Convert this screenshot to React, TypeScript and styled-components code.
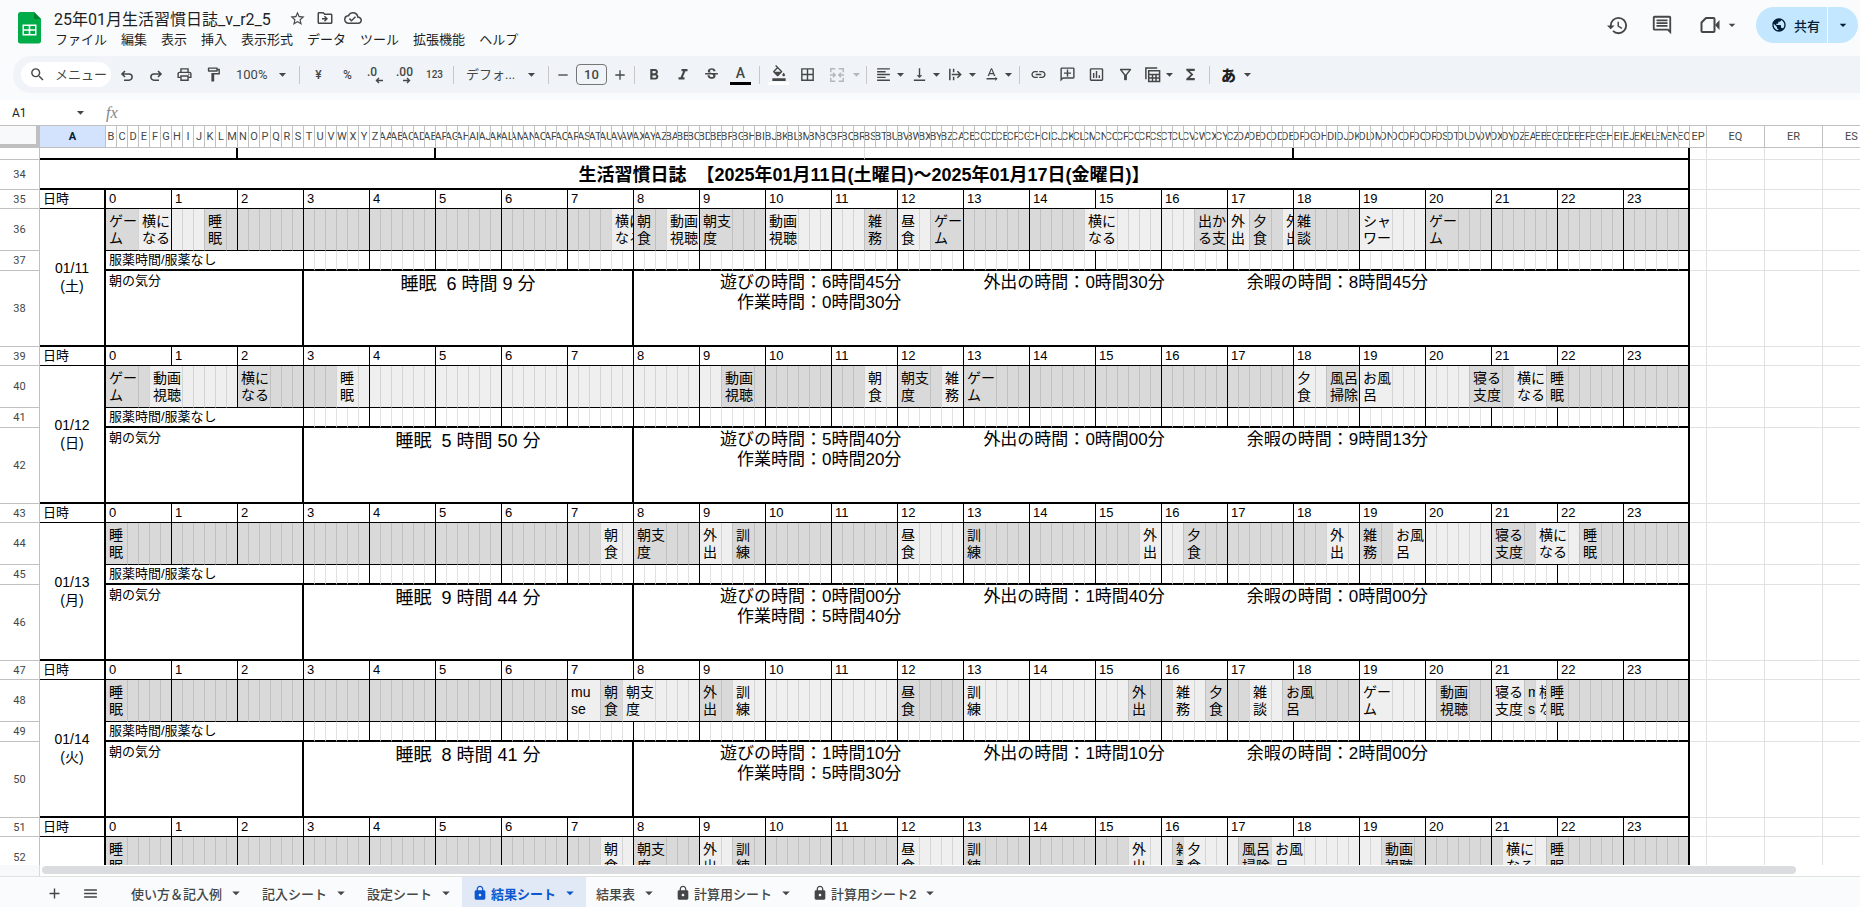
import React from "react";
import styled, { createGlobalStyle, css } from "styled-components";
import {
  MdAdd, MdArrowDropDown, MdBorderAll, MdFormatAlignLeft, MdFormatBold, MdFormatColorFill,
  MdFormatItalic, MdFunctions, MdHistory, MdInsertChartOutlined, MdLink,
  MdLock, MdMenu, MdOutlineAddComment, MdOutlineCloudDone, MdOutlineComment,
  MdOutlineDriveFileMove, MdOutlineFilterAlt, MdOutlineFormatPaint, MdOutlinePrint, MdPublic,
  MdRemove, MdSearch, MdStarBorder, MdStrikethroughS, MdTextRotationNone, MdVerticalAlignBottom,
} from "react-icons/md";

const UI = `Roboto, "Noto Sans CJK JP", sans-serif`;
const CELL = `"Liberation Sans", "Noto Sans CJK JP", sans-serif`;

const Global = createGlobalStyle`
  *, *::before, *::after { box-sizing: border-box; }
  body { margin: 0; background: #f9fbfd; color: #444746; font-family: ${UI}; overflow: hidden; }
  button, input, select {
    font-family: inherit; color: inherit; background: none; border: 0; padding: 0; margin: 0; outline: 0;
  }
  svg { display: block; flex: none; }
`;

/* ---------- shell ---------- */

const Page = styled.div`
  display: flex;
  flex-direction: column;
  height: 100vh;
`;

const Header = styled.header`
  display: flex;
  align-items: flex-start;
  justify-content: space-between;
  height: 56px;
  flex: none;
  padding: 7px 2px 0 18px;
`;

const Brand = styled.div`
  display: flex;
  gap: 6px;
`;

const Logo = styled.svg`
  width: 24px;
  height: 32px;
  margin-top: 5px;
`;

const TitleRow = styled.div`
  display: flex;
  align-items: center;
  height: 22px;
  padding-left: 6px;
  gap: 10px;
`;

const TitleInput = styled.input`
  width: 225px;
  height: 22px;
  font-size: 16px;
  color: #1f1f1f;
`;

const PlainButton = styled.button`
  display: flex;
  align-items: center;
  justify-content: center;
`;

const MenuBar = styled.nav`
  display: flex;
  height: 22px;
`;

const MenuItem = styled.button`
  padding: 0 7px;
  font-size: 13px;
  line-height: 22px;
  color: #1f1f1f;
  white-space: nowrap;
`;

const HeaderTools = styled.div`
  display: flex;
  align-items: center;
  height: 36px;
  gap: 22px;
`;

const MeetButton = styled(PlainButton)`
  gap: 4px;
  margin-left: 5px;
`;

const Share = styled.div`
  display: flex;
  height: 36px;
  margin-left: -6px;
  border-radius: 18px;
  overflow: hidden;
  background: #c2e7ff;
  color: #001d35;
`;

const ShareMain = styled(PlainButton)`
  gap: 7px;
  width: 71px;
  padding-left: 8px;
  font-size: 13px;
  font-weight: 500;
`;

const ShareMore = styled(PlainButton)`
  width: 31px;
  border-left: 1px solid #f9fbfd;
`;

/* ---------- toolbar ---------- */

const Toolbar = styled.div`
  display: flex;
  align-items: center;
  flex: none;
  height: 37px;
  margin: 0 0 7px 13px;
  padding-left: 8px;
  border-radius: 18px 0 0 18px;
  background: #f0f4f9;
`;

const SearchPill = styled.label`
  display: flex;
  align-items: center;
  gap: 9px;
  width: 90px;
  height: 25px;
  margin-right: 1px;
  padding-left: 8px;
  border-radius: 13px;
  background: #fff;
`;

const SearchInput = styled.input`
  width: 54px;
  font-size: 13px;
  &::placeholder { color: #444746; opacity: 1; }
`;

const Tool = styled(PlainButton)<{ $w?: number; $faint?: boolean; $size?: number }>`
  width: ${(p) => p.$w ?? 29}px;
  height: 25px;
  flex: none;
  font-size: ${(p) => p.$size ?? 13}px;
  font-weight: 500;
  ${(p) => p.$faint && css`color: #b4b7ba;`}
`;

const DropTool = styled(Tool)`
  justify-content: flex-start;
  padding-left: ${(p) => (p.$w === 40 ? 7 : 4)}px;
  gap: ${(p) => (p.$w === 40 ? 3 : 0)}px;
`;

const Sep = styled.span`
  flex: none;
  width: 1px;
  height: 18px;
  margin: 0 4px;
  background: #c7c7c7;
`;

const Picker = styled.label<{ $w: number }>`
  display: flex;
  align-items: center;
  justify-content: space-between;
  flex: none;
  width: ${(p) => p.$w}px;
  height: 25px;
  padding: 0 4px 0 8px;
`;

const PickerSelect = styled.select`
  appearance: none;
  font-size: 13px;
`;

const SizeGroup = styled.div`
  display: flex;
  align-items: center;
  gap: 3px;
`;

const SizeInput = styled.input`
  width: 31px;
  height: 21px;
  border: 1px solid #747775;
  border-radius: 4px;
  text-align: center;
  font-size: 13px;
  font-weight: 500;
`;

const Swatch = styled.span<{ $c: string }>`
  display: flex;
  flex-direction: column;
  align-items: center;
  width: 21px;
  height: 20px;
  border-bottom: 3px solid ${(p) => p.$c};
  font-size: 14px;
  line-height: 17px;
`;

const Mirror = styled.span`
  transform: scaleX(-1);
`;

const Kana = styled.span`
  font-size: 15px;
  font-weight: 900;
  color: #1f1f1f;
`;

/* ---------- formula bar ---------- */

const FormulaBar = styled.div`
  display: flex;
  align-items: center;
  flex: none;
  height: 26px;
  padding: 0 12px;
  background: #fff;
  border-bottom: 1px solid #c0c0c0;
`;

const NameBox = styled.input`
  width: 60px;
  font-size: 12px;
  color: #1f1f1f;
`;

const Fx = styled.label`
  margin: 0 10px 0 17px;
  font: italic 16px "Liberation Serif", serif;
  color: #80868b;
`;

const FormulaInput = styled.input`
  flex: 1;
  font-size: 13px;
`;

/* ---------- sheet ---------- */

const Viewport = styled.main`
  flex: 1;
  min-height: 0;
  overflow: hidden;
  background: #fff;
`;

const Grid = styled.table`
  table-layout: fixed;
  width: 1881px;
  border-collapse: separate;
  border-spacing: 0;
  font-family: ${CELL};
  font-size: 13px;
  line-height: 16px;
  color: #000;
  td, th { padding: 0; overflow: hidden; white-space: nowrap; }
`;

const Corner = styled.th`
  height: 22px;
  background: #f8f9fa;
  border: solid #c0c0c0;
  border-width: 0 4px 4px 0;
`;

const ColHead = styled.th<{ $on?: boolean }>`
  height: 22px;
  border: solid #c0c0c0;
  border-width: 0 1px 1px 0;
  font: ${(p) => (p.$on ? 700 : 400)} 11px ${UI};
  color: ${(p) => (p.$on ? "#001d35" : "#444746")};
  background: ${(p) => (p.$on ? "#d3e3fd" : "#fff")};
`;

const ColName = styled.span`
  display: flex;
  justify-content: center;
`;

const RowHead = styled.th`
  border: solid #c0c0c0;
  border-width: 0 1px 1px 0;
  font: 400 11px ${UI};
  color: #444746;
`;

const Row = styled.tr<{ $h: number }>`
  height: ${(p) => p.$h}px;
`;

const Cell = styled.td<{ $r?: number; $b?: number; $rc?: string; $bg?: string }>`
  border: solid #000;
  border-width: 0 ${(p) => p.$r ?? 1}px ${(p) => p.$b ?? 1}px 0;
  border-right-color: ${(p) => p.$rc ?? "#000"};
  background: ${(p) => p.$bg ?? "#fff"};
`;

const TextCell = styled(Cell)`
  && { padding-left: 3px; }
`;

const LabelCell = styled(Cell)`
  && { padding-left: 3px; white-space: pre; }
  font-size: 14px;
  line-height: 17px;
`;

const DateCell = styled(Cell)`
  text-align: center;
  font-size: 14px;
  line-height: 18px;
`;

const TitleCell = styled(Cell)`
  && { padding-top: 2px; white-space: pre; }
  text-align: center;
  font-size: 18px;
  font-weight: 700;
  line-height: 24px;
`;

const MoodCell = styled(Cell)`
  && { padding: 2px 0 0 3px; }
  vertical-align: top;
  line-height: 16px;
`;

const SleepCell = styled(Cell)`
  && { padding-top: 2px; white-space: pre; }
  vertical-align: top;
  text-align: center;
  font-size: 18px;
  line-height: 22px;
`;

const SumCell = styled(Cell)`
  && { padding: 2px 0 0 86px; }
  vertical-align: top;
  font-size: 17px;
  line-height: 20px;
`;

const Sums = styled.div`
  display: flex;
  gap: 82px;
  text-align: right;
`;

const Outer = styled.td`
  border: solid #e1e1e1;
  border-width: 0 1px 1px 0;
`;

/* ---------- footer ---------- */

const ScrollTrack = styled.div`
  display: flex;
  flex: none;
  height: 12px;
  background: #fff;
  border-bottom: 1px solid #e1e3e1;
`;

const ScrollGutter = styled.div`
  width: 40px;
  margin-right: 2px;
  background: #f8f9fa;
  border-right: 1px solid #d9d9d9;
`;

const ScrollThumb = styled.div`
  flex: 1;
  height: 8px;
  margin: 1px 64px 0 0;
  border-radius: 4px;
  background: #dadce0;
`;

const Tabs = styled.footer`
  display: flex;
  flex: none;
  height: 30px;
  padding-left: 36px;
`;

const TabTool = styled(PlainButton)`
  width: 36px;
  padding-top: 2px;
`;

const TabList = styled.div`
  display: flex;
  margin-left: 13px;
`;

const Tab = styled.button<{ $on?: boolean }>`
  display: flex;
  align-items: center;
  padding: 2px 7px 0 10px;
  font-size: 13px;
  font-weight: ${(p) => (p.$on ? 700 : 500)};
  color: ${(p) => (p.$on ? "#0b57d0" : "#444746")};
  background: ${(p) => (p.$on ? "#e1e9f7" : "transparent")};
  white-space: nowrap;
`;

const TabLock = styled(MdLock)`
  margin-right: 3px;
`;

const TabArrow = styled(MdArrowDropDown)`
  margin-left: 5px;
`;

/* ---------- icons drawn here ---------- */

const Stroke = ({ children, size = 18 }: { children: React.ReactNode; size?: number }) => (
  <svg width={size} height={size} viewBox="0 0 18 18" fill="none" stroke="currentColor" strokeWidth="1.6">
    {children}
  </svg>
);

const UndoIcon = () => (
  <Stroke><path d="M7 5 4 8l3 3M4.500 8h6.500a3.100 3.100 0 0 1 0 6.200H6" /></Stroke>
);
const RedoIcon = () => (
  <Stroke><path d="M11 5l3 3-3 3M13.500 8H7a3.100 3.100 0 0 0 0 6.200h5" /></Stroke>
);
const MergeIcon = () => (
  <Stroke size={16}>
    <path d="M7 2H2v4M11 2h5v4M7 16H2v-4M11 16h5v-4M1 9h5M17 9h-5M4.500 6.500 7 9l-2.500 2.500M13.500 6.500 11 9l2.500 2.500" />
  </Stroke>
);
const OverflowIcon = () => (
  <Stroke size={17}><path d="M3 3v12M7 3v3.500M7 11.500V15M5 9h9M11 5.500 14.500 9 11 12.500" /></Stroke>
);
const TableViewIcon = () => (
  <Stroke size={17}><path d="M2 14V2h12M5 5h11.500v11.500H5zM5 9h11.500M5 12.700h11.500M9 9v7.500M12.700 9v7.500" /></Stroke>
);
const DecimalIcon = ({ digits, dir }: { digits: string; dir: "l" | "r" }) => (
  <svg width="22" height="20" viewBox="0 0 22 20">
    <text x="1" y="11" fontFamily="Roboto" fontSize="12" fontWeight="500" fill="currentColor">{digits}</text>
    <path
      d={dir === "l" ? "M17 15.500h-6M13 13l-2.500 2.500L13 18" : "M8 15.500h6M12 13l2.500 2.500L12 18"}
      fill="none" stroke="currentColor" strokeWidth="1.400"
    />
  </svg>
);
const MeetIcon = () => (
  <svg width="20" height="18" viewBox="0 0 20 18">
    <path d="M6 2h7.500a1 1 0 0 1 1 1v12a1 1 0 0 1-1 1H2.500a1 1 0 0 1-1-1V6.500z" fill="none" stroke="currentColor" strokeWidth="2" strokeLinejoin="round" />
    <path d="M15 9l4.500-5v10z" fill="currentColor" />
  </svg>
);

/* ---------- data ---------- */

type Seg = [slot: number, label: string];
type Day = { row: number; date?: [string, string]; segs: Seg[]; sleep?: string; sums?: string[] };

const GAME = "ゲー\nム", LIE = "横に\nなる", SLEEP = "睡\n眠", BREAKFAST = "朝\n食", READY = "朝支\n度";
const VIDEO = "動画\n視聴", CHORE = "雑\n務", LUNCH = "昼\n食", OUT = "外\n出", DINNER = "夕\n食";
const TALK = "雑\n談", TRAIN = "訓\n練", BATH = "お風\n呂", SCRUB = "風呂\n掃除", BED = "寝る\n支度", MUSE = "mu\nse";

const days: Day[] = [
  {
    row: 35, date: ["01/11", "(土)"], sleep: "睡眠  6 時間 9 分", sums: ["6時間45分", "0時間30分", "0時間30分", "8時間45分"],
    segs: [[0, GAME], [3, LIE], [9, SLEEP], [46, LIE], [48, BREAKFAST], [51, VIDEO], [54, READY], [60, VIDEO], [69, CHORE],
      [72, LUNCH], [75, GAME], [89, LIE], [99, "出か\nる支"], [102, OUT], [104, DINNER], [107, OUT], [108, TALK],
      [114, "シャ\nワー"], [120, GAME]],
  },
  {
    row: 39, date: ["01/12", "(日)"], sleep: "睡眠  5 時間 50 分", sums: ["5時間40分", "0時間20分", "0時間00分", "9時間13分"],
    segs: [[0, GAME], [4, VIDEO], [12, LIE], [21, SLEEP], [56, VIDEO], [69, BREAKFAST], [72, READY], [76, CHORE], [78, GAME],
      [108, DINNER], [111, SCRUB], [114, BATH], [124, BED], [128, LIE], [131, SLEEP]],
  },
  {
    row: 43, date: ["01/13", "(月)"], sleep: "睡眠  9 時間 44 分", sums: ["0時間00分", "5時間40分", "1時間40分", "0時間00分"],
    segs: [[0, SLEEP], [45, BREAKFAST], [48, READY], [54, OUT], [57, TRAIN], [72, LUNCH], [78, TRAIN], [94, OUT], [98, DINNER],
      [111, OUT], [114, CHORE], [117, BATH], [126, BED], [130, LIE], [134, SLEEP]],
  },
  {
    row: 47, date: ["01/14", "(火)"], sleep: "睡眠  8 時間 41 分", sums: ["1時間10分", "5時間30分", "1時間10分", "2時間00分"],
    segs: [[0, SLEEP], [42, MUSE], [45, BREAKFAST], [47, READY], [54, OUT], [57, TRAIN], [72, LUNCH], [78, TRAIN], [93, OUT],
      [97, CHORE], [100, DINNER], [104, TALK], [107, BATH], [114, GAME], [121, VIDEO], [126, BED], [129, MUSE], [130, LIE],
      [131, SLEEP]],
  },
  {
    row: 51,
    segs: [[0, SLEEP], [45, BREAKFAST], [48, READY], [54, OUT], [57, TRAIN], [72, LUNCH], [78, TRAIN], [93, OUT], [97, CHORE],
      [98, DINNER], [103, SCRUB], [106, BATH], [116, VIDEO], [127, LIE], [131, SLEEP]],
  },
];

const SLOTS = 144;
const range = (n: number) => Array.from({ length: n }, (_, i) => i);
const colName = (n: number): string =>
  n < 26 ? String.fromCharCode(65 + n) : colName(Math.floor(n / 26) - 1) + String.fromCharCode(65 + (n % 26));

const DARK = "#d9d9d9", LIGHT = "#efefef";

const OuterCells = () => <>{range(4).map((i) => <Outer key={i} />)}</>;

/* One day's activity strip: each activity is a label cell followed by plain ten-minute cells. */
const ActivityCells = ({ segs }: { segs: Seg[] }) => {
  const edge = (end: number, nextDark: boolean) =>
    end === SLOTS ? { $r: 2 } : end % 6 === 0 ? {} : { $rc: nextDark ? "#c0c0c0" : "#d4d4d4" };
  return (
    <>
      {segs.map(([start, label], i) => {
        const end = segs[i + 1]?.[0] ?? SLOTS;
        const dark = i % 2 === 0;
        const bg = dark ? DARK : LIGHT;
        const span = Math.min(label.indexOf("\n") === 1 ? 2 : 3, end - start);
        const labelEnd = start + span;
        return (
          <React.Fragment key={start}>
            <LabelCell colSpan={span} $bg={bg} {...edge(labelEnd, labelEnd === end ? !dark : dark)}>{label}</LabelCell>
            {range(end - labelEnd).map((k) => {
              const e = labelEnd + k + 1;
              return <Cell key={k} $bg={bg} {...edge(e, e === end ? !dark : dark)} />;
            })}
          </React.Fragment>
        );
      })}
    </>
  );
};

const DayRows = ({ day }: { day: Day }) => (
  <>
    <Row $h={19}>
      <RowHead>{day.row}</RowHead>
      <TextCell $r={2}>日時</TextCell>
      {range(24).map((h) => <TextCell key={h} colSpan={6} $r={h === 23 ? 2 : 1}>{h}</TextCell>)}
      <OuterCells />
    </Row>
    <Row $h={42}>
      <RowHead>{day.row + 1}</RowHead>
      <DateCell rowSpan={day.date ? 3 : 1} $r={2} $b={2}>
        {day.date && <>{day.date[0]}<br />{day.date[1]}</>}
      </DateCell>
      <ActivityCells segs={day.segs} />
      <OuterCells />
    </Row>
    {day.sums && (
      <>
        <Row $h={20}>
          <RowHead>{day.row + 2}</RowHead>
          <TextCell colSpan={18} $b={2}>服薬時間/服薬なし</TextCell>
          {range(126).map((k) => {
            const hour = (k + 1) % 6 === 0;
            return <Cell key={k} $b={2} $r={k === 125 ? 2 : 1} $rc={hour ? "#000" : "#e1e1e1"} />;
          })}
          <OuterCells />
        </Row>
        <Row $h={76}>
          <RowHead>{day.row + 3}</RowHead>
          <MoodCell colSpan={18} $r={2} $b={2}>朝の気分</MoodCell>
          <SleepCell colSpan={30} $r={2} $b={2}>{day.sleep}</SleepCell>
          <SumCell colSpan={96} $r={2} $b={2}>
            <Sums>
              <div>遊びの時間：{day.sums[0]}<br />作業時間：{day.sums[1]}</div>
              <div>外出の時間：{day.sums[2]}</div>
              <div>余暇の時間：{day.sums[3]}</div>
            </Sums>
          </SumCell>
          <OuterCells />
        </Row>
      </>
    )}
  </>
);

const Sheet = () => (
  <Viewport>
    <Grid>
      <colgroup>
        <col width={40} />
        <col width={66} />
        {range(SLOTS).map((i) => <col key={i} width={11} />)}
        <col width={17} />
        <col width={58} />
        <col width={58} />
        <col width={58} />
      </colgroup>
      <thead>
        <tr>
          <Corner />
          {range(SLOTS + 5).map((i) => (
            <ColHead key={i} $on={i === 0}><ColName>{colName(i)}</ColName></ColHead>
          ))}
        </tr>
      </thead>
      <tbody>
        <Row $h={12}>
          <RowHead />
          <Cell colSpan={13} $r={2} $b={2} />
          <Cell colSpan={18} $r={2} $b={2} />
          <Cell colSpan={39} $b={2} $rc="#e1e1e1" />
          <Cell colSpan={39} $r={2} $b={2} />
          <Cell colSpan={36} $r={2} $b={2} />
          <OuterCells />
        </Row>
        <Row $h={30}>
          <RowHead>34</RowHead>
          <TitleCell colSpan={145} $r={2} $b={2}>
            生活習慣日誌  【2025年01月11日(土曜日)～2025年01月17日(金曜日)】
          </TitleCell>
          <OuterCells />
        </Row>
        {days.map((d) => <DayRows key={d.row} day={d} />)}
      </tbody>
    </Grid>
  </Viewport>
);

const menus = ["ファイル", "編集", "表示", "挿入", "表示形式", "データ", "ツール", "拡張機能", "ヘルプ"];
const tabs: { name: string; lock?: boolean; on?: boolean }[] = [
  { name: "使い方＆記入例" }, { name: "記入シート" }, { name: "設定シート" },
  { name: "結果シート", lock: true, on: true }, { name: "結果表" },
  { name: "計算用シート", lock: true }, { name: "計算用シート2", lock: true },
];

const Arrow = () => <MdArrowDropDown size={17} />;

export default function App() {
  return (
    <Page>
      <Global />
      <Header>
        <Brand>
          <Logo viewBox="0 0 24 32">
            <path d="M2.500 0H16l7 7v22.500a2.500 2.500 0 0 1-2.500 2H2.500A2.500 2.500 0 0 1 0 29V2.500A2.500 2.500 0 0 1 2.500 0z" fill="#00ac47" />
            <path d="M16 0l7 7h-7z" fill="#00832d" />
            <path d="M4.500 12.500h14v11h-14zM6 14v3.200h4.700V14zm6.300 0v3.200H17V14zM6 18.800V22h4.700v-3.200zm6.300 0V22H17v-3.200z" fill="#fff" fillRule="evenodd" />
          </Logo>
          <div>
            <TitleRow>
              <TitleInput aria-label="ドキュメント名" defaultValue="25年01月生活習慣日誌_v_r2_5" />
              <PlainButton aria-label="スター"><MdStarBorder size={17} /></PlainButton>
              <PlainButton aria-label="移動"><MdOutlineDriveFileMove size={18} /></PlainButton>
              <PlainButton aria-label="保存状態"><MdOutlineCloudDone size={18} /></PlainButton>
            </TitleRow>
            <MenuBar>{menus.map((m) => <MenuItem key={m}>{m}</MenuItem>)}</MenuBar>
          </div>
        </Brand>
        <HeaderTools>
          <PlainButton aria-label="変更履歴"><MdHistory size={23} /></PlainButton>
          <PlainButton aria-label="コメント"><MdOutlineComment size={22} /></PlainButton>
          <MeetButton aria-label="ビデオ通話"><MeetIcon /><MdArrowDropDown size={16} /></MeetButton>
          <Share>
            <ShareMain><MdPublic size={16} />共有</ShareMain>
            <ShareMore aria-label="共有オプション"><MdArrowDropDown size={16} /></ShareMore>
          </Share>
        </HeaderTools>
      </Header>

      <Toolbar>
        <SearchPill>
          <MdSearch size={17} />
          <SearchInput aria-label="メニュー検索" placeholder="メニュー" />
        </SearchPill>
        <Tool aria-label="元に戻す"><UndoIcon /></Tool>
        <Tool aria-label="やり直し"><RedoIcon /></Tool>
        <Tool aria-label="印刷"><MdOutlinePrint size={17} /></Tool>
        <Tool aria-label="書式のコピー"><MdOutlineFormatPaint size={17} /></Tool>
        <Picker $w={67}>
          <PickerSelect aria-label="ズーム"><option>100%</option></PickerSelect>
          <Arrow />
        </Picker>
        <Sep />
        <Tool $size={12}>¥</Tool>
        <Tool $size={12}>%</Tool>
        <Tool aria-label="小数点以下の桁数を減らす"><DecimalIcon digits=".0" dir="l" /></Tool>
        <Tool aria-label="小数点以下の桁数を増やす"><DecimalIcon digits=".00" dir="r" /></Tool>
        <Tool $size={10}>123</Tool>
        <Sep />
        <Picker $w={86}>
          <PickerSelect aria-label="フォント"><option>デフォ...</option></PickerSelect>
          <Arrow />
        </Picker>
        <Sep />
        <SizeGroup>
          <Tool $w={20} aria-label="小さく"><MdRemove size={16} /></Tool>
          <SizeInput aria-label="フォントサイズ" defaultValue="10" />
          <Tool $w={20} aria-label="大きく"><MdAdd size={16} /></Tool>
        </SizeGroup>
        <Sep />
        <Tool aria-label="太字"><MdFormatBold size={18} /></Tool>
        <Tool aria-label="斜体"><MdFormatItalic size={18} /></Tool>
        <Tool aria-label="取り消し線"><MdStrikethroughS size={17} /></Tool>
        <Tool aria-label="テキストの色"><Swatch $c="#000">A</Swatch></Tool>
        <Sep />
        <Tool aria-label="塗りつぶしの色"><Swatch $c="#fff"><MdFormatColorFill size={16} /></Swatch></Tool>
        <Tool aria-label="枠線"><MdBorderAll size={17} /></Tool>
        <DropTool $w={40} $faint aria-label="セルを結合"><MergeIcon /><Arrow /></DropTool>
        <Sep />
        <DropTool $w={36} aria-label="水平方向の配置"><MdFormatAlignLeft size={17} /><Arrow /></DropTool>
        <DropTool $w={36} aria-label="垂直方向の配置"><MdVerticalAlignBottom size={17} /><Arrow /></DropTool>
        <DropTool $w={36} aria-label="テキストの折り返し"><OverflowIcon /><Arrow /></DropTool>
        <DropTool $w={36} aria-label="テキストの回転"><MdTextRotationNone size={17} /><Arrow /></DropTool>
        <Sep />
        <Tool aria-label="リンクを挿入"><MdLink size={17} /></Tool>
        <Tool aria-label="コメントを挿入"><Mirror><MdOutlineAddComment size={17} /></Mirror></Tool>
        <Tool aria-label="グラフを挿入"><MdInsertChartOutlined size={17} /></Tool>
        <Tool aria-label="フィルタを作成"><MdOutlineFilterAlt size={17} /></Tool>
        <DropTool $w={36} aria-label="フィルタ表示"><TableViewIcon /><Arrow /></DropTool>
        <Tool aria-label="関数"><MdFunctions size={17} /></Tool>
        <Sep />
        <DropTool $w={40} aria-label="入力ツール"><Kana>あ</Kana><Arrow /></DropTool>
      </Toolbar>

      <FormulaBar>
        <NameBox aria-label="名前ボックス" defaultValue="A1" />
        <Arrow />
        <Fx htmlFor="formula">fx</Fx>
        <FormulaInput id="formula" />
      </FormulaBar>

      <Sheet />

      <ScrollTrack>
        <ScrollGutter />
        <ScrollThumb />
      </ScrollTrack>

      <Tabs>
        <TabTool aria-label="シートを追加"><MdAdd size={17} /></TabTool>
        <TabTool aria-label="すべてのシート"><MdMenu size={17} /></TabTool>
        <TabList>
          {tabs.map((t) => (
            <Tab key={t.name} $on={t.on}>
              {t.lock && <TabLock size={16} />}
              {t.name}
              <TabArrow size={18} />
            </Tab>
          ))}
        </TabList>
      </Tabs>
    </Page>
  );
}
